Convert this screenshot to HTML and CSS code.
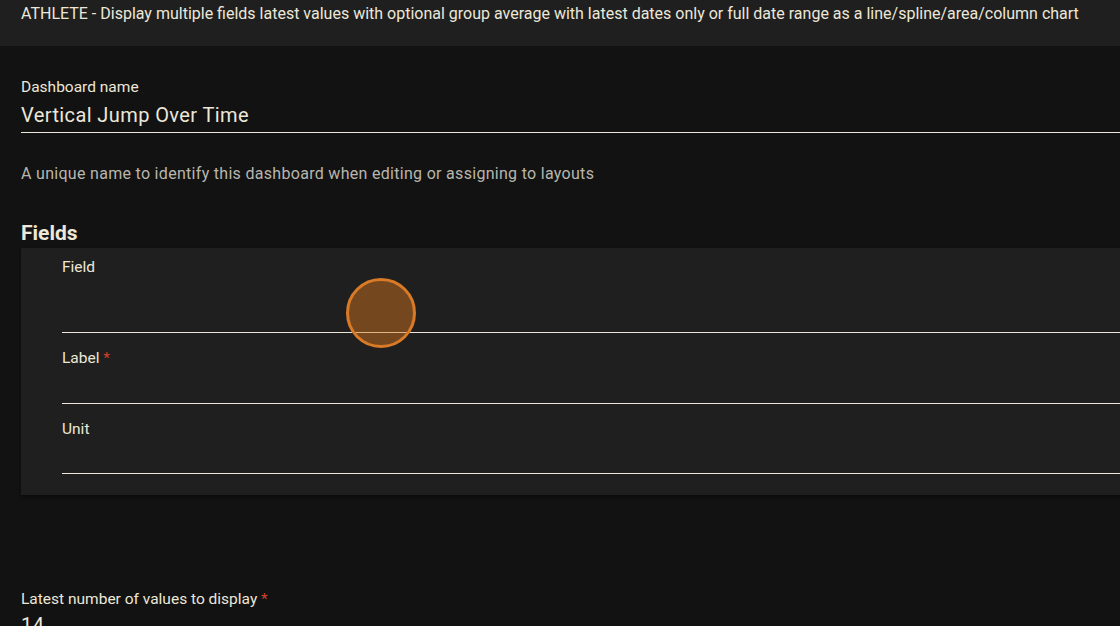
FILE: index.html
```html
<!DOCTYPE html>
<html lang="en">
  <head>
    <meta charset="UTF-8" />
    <meta name="viewport" content="width=device-width, initial-scale=1.0" />
    <title>Dashboard Editor</title>
    <link rel="stylesheet" href="styles.css">
  </head>
  <body>
    <header class="topbar">
      ATHLETE - Display multiple fields latest values with optional group average with latest dates only or full date range as a line/spline/area/column chart
    </header>

    <main class="form">
      <div class="text-field name-field">
        <label class="field-label">Dashboard name</label>
        <div class="field-input big">Vertical Jump Over Time</div>
      </div>
      <p class="helper">A unique name to identify this dashboard when editing or assigning to layouts</p>

      <h2 class="section-title">Fields</h2>
      <div class="card">
        <div class="cursor-dot"></div>
        <div class="text-field tall">
          <label class="field-label">Field</label>
          <div class="field-input"></div>
        </div>
        <div class="text-field">
          <label class="field-label">Label <span class="req">*</span></label>
          <div class="field-input"></div>
        </div>
        <div class="text-field last">
          <label class="field-label">Unit</label>
          <div class="field-input"></div>
        </div>
      </div>

      <div class="text-field count-field">
        <label class="field-label">Latest number of values to display <span class="req">*</span></label>
        <div class="field-input big">14</div>
      </div>
    </main>
  </body>
</html>
```

FILE: styles.css
```css
html,
body {
  margin: 0;
  padding: 0;
  height: 626px;
  overflow: hidden;
}
body {
  font-family: Roboto, "Liberation Sans", sans-serif;
  background-color: #121212;
  color: #ece7d8;
}
.topbar {
  background-color: #1f1f1f;
  height: 46px;
  box-sizing: border-box;
  padding: 4px 21px 0;
  font-size: 16px;
  line-height: 19px;
  white-space: nowrap;
}
.form {
  width: 1200px;
  padding: 32px 0 0 21px;
}
.text-field {
  display: flex;
  flex-direction: column;
}
.field-label {
  font-size: 15.5px;
  line-height: 19px;
}
.req {
  color: #d2402a;
}
.field-input {
  border-bottom: 1px solid #ece7d8;
  font-size: 20px;
  line-height: 20px;
  letter-spacing: 0.4px;
}
.big {
  padding: 8px 0 7px;
}
.helper {
  margin: 31px 0 0;
  font-size: 16px;
  line-height: 19px;
  letter-spacing: 0.3px;
  color: #b9b6ad;
}
.section-title {
  margin: 38px 0 0;
  font-size: 21px;
  line-height: 24px;
  font-weight: 700;
}
.card {
  position: relative;
  margin-top: 3px;
  background-color: #1f1f1f;
  padding: 10px 0 21px 41px;
  box-shadow: 0 2px 3px rgba(0, 0, 0, 0.4);
}
.card .text-field {
  margin-bottom: 16px;
}
.card .text-field.last {
  margin-bottom: 0;
}
.card .field-input {
  height: 35px;
}
.card .last .field-input {
  height: 34px;
}
.card .tall .field-input {
  height: 55px;
}
.cursor-dot {
  position: absolute;
  left: 325px;
  top: 30px;
  width: 64px;
  height: 64px;
  border-radius: 50%;
  border: 3px solid #d97a27;
  background-color: rgba(220, 120, 30, 0.45);
}
.count-field {
  margin-top: 95px;
}
.count-field .big {
  padding-top: 6px;
}
```
